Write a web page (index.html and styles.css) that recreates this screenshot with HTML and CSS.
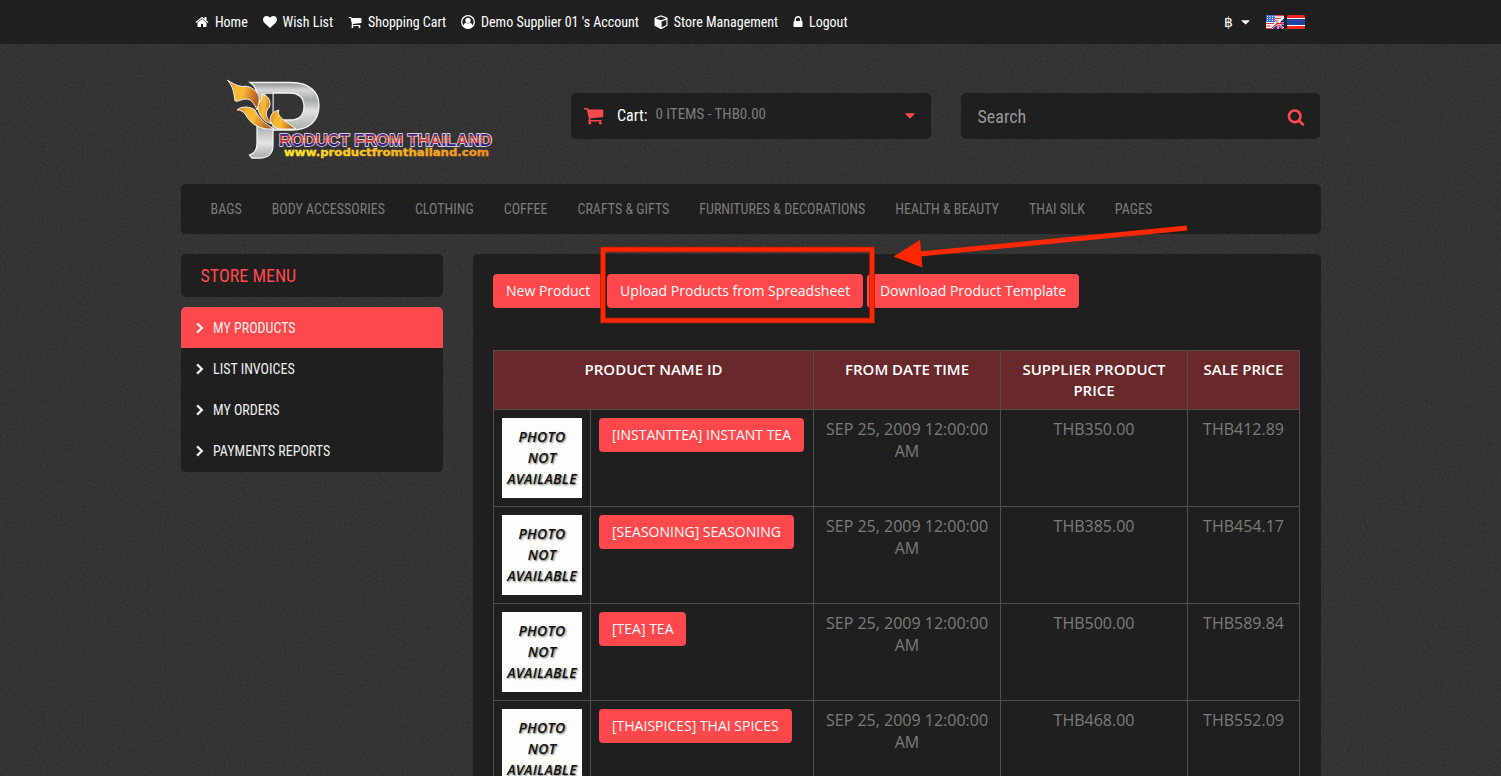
FILE: index.html
```html
<!DOCTYPE html>
<html lang="en">
<head>
<meta charset="utf-8">
<title>Product From Thailand - My Products</title>
<link rel="stylesheet" href="styles.css">
</head>
<body>
<svg class="texture" aria-hidden="true">
  <filter id="grain" x="0" y="0" width="100%" height="100%">
    <feTurbulence type="fractalNoise" baseFrequency="0.45" numOctaves="3" seed="7"/>
    <feColorMatrix type="matrix" values="0 0 0 0 1  0 0 0 0 1  0 0 0 0 1  0.7 0.3 0 0 -0.43"/>
  </filter>
  <rect width="100%" height="100%" filter="url(#grain)"/>
</svg>
<svg class="defs" aria-hidden="true">
  <symbol id="home" viewBox="0 0 1792 1792"><path d="M1472 992v480q0 26-19 45t-45 19h-384v-384h-256v384h-384q-26 0-45-19t-19-45v-480q0-1 .5-3t.5-3l575-474 575 474q1 2 1 6zm223-69l-62 74q-8 9-21 11h-3q-13 0-21-7l-692-577-692 577q-12 8-24 7-13-2-21-11l-62-74q-8-10-7-23.5t11-21.5l719-599q32-26 76-26t76 26l244 204v-195q0-14 9-23t23-9h192q14 0 23 9t9 23v408l219 182q10 8 11 21.5t-7 23.5z"/></symbol>
  <symbol id="heart" viewBox="0 0 1792 1792"><path d="M896 1664q-26 0-44-18l-624-602q-10-8-27.500-26t-55.500-65.500-68-97.500-53.500-121-23.500-138q0-220 127-344t351-124q62 0 126.500 21.500t120 58 95.500 68.500 76 68q36-36 76-68t95.500-68.500 120-58 126.500-21.500q224 0 351 124t127 344q0 221-229 450l-623 600q-18 18-44 18z"/></symbol>
  <symbol id="cart" viewBox="0 0 1792 1792"><path d="M704 1536q0 52-38 90t-90 38-90-38-38-90 38-90 90-38 90 38 38 90zm896 0q0 52-38 90t-90 38-90-38-38-90 38-90 90-38 90 38 38 90zm128-1088v512q0 24-16.500 42.500t-40.500 21.500l-1044 122q13 60 13 70 0 16-24 64h920q26 0 45 19t19 45-19 45-45 19h-1024q-26 0-45-19t-19-45q0-11 8-31.500t16-36 21.500-40 15.500-29.500l-177-823h-204q-26 0-45-19t-19-45 19-45 45-19h256q16 0 28.500 6.500t19.500 15.500 13 24.500 8 26 5.500 29.500 4.500 26h1201q26 0 45 19t19 45z"/></symbol>
  <symbol id="user" viewBox="0 0 14 14"><circle cx="7" cy="7" r="6.300" fill="none" stroke="currentColor" stroke-width="1.300"/><circle cx="7" cy="5.400" r="2.700"/><path d="M2.300 11.200C2.600 9.200 3.600 8 4.900 7.700Q7 9.300 9.100 7.700C10.400 8 11.400 9.200 11.700 11.200Q9.800 13.300 7 13.300T2.300 11.200z"/></symbol>
  <symbol id="cube" viewBox="0 0 14 14"><path fill-rule="evenodd" d="M7 .2 13 2.400Q13.500 2.600 13.500 3.300V10.200Q13.500 10.800 13 11.100L7.500 13.900Q7 14.100 6.500 13.900L1 11.100Q.5 10.800.5 10.200V3.300Q.5 2.600 1 2.400zM7 1.500 1.800 3.400 7 5.300 12.200 3.400zM7.600 6.500V12.500L12.400 10.100V4.700z"/></symbol>
  <symbol id="lock" viewBox="0 0 1792 1792"><path d="M640 768h512v-192q0-106-75-181t-181-75-181 75-75 181v192zm832 96v576q0 40-28 68t-68 28h-960q-40 0-68-28t-28-68v-576q0-40 28-68t68-28h32v-192q0-184 132-316t316-132 316 132 132 316v192h32q40 0 68 28t28 68z"/></symbol>
  <symbol id="search" viewBox="0 0 1792 1792"><path d="M1216 832q0-185-131.500-316.500t-316.500-131.500-316.500 131.500-131.500 316.500 131.500 316.500 316.500 131.500 316.500-131.500 131.500-316.500zm512 832q0 52-38 90t-90 38q-54 0-90-38l-343-342q-179 124-399 124-143 0-273.500-55.500t-225-150-150-225-55.500-273.500 55.500-273.500 150-225 225-150 273.500-55.500 273.500 55.500 225 150 150 225 55.500 273.500q0 220-124 399l343 343q37 37 37 90z"/></symbol>
  <symbol id="chevron" viewBox="0 0 8 12"><path d="M1.900.6 7.500 6 1.900 11.400.3 9.800 4.200 6 .3 2.200z"/></symbol>
  <symbol id="caret" viewBox="0 0 10 6"><path d="M.5.300h9q.5.300.1.800L5.400 5.200q-.4.300-.8 0L.4 1.100Q0 .6.500.3z"/></symbol>
</svg>

<header class="topbar">
  <div class="container topbar-row">
    <nav class="toplinks">
      <a><svg class="ico"><use href="#home"/></svg><span>Home</span></a>
      <a><svg class="ico"><use href="#heart"/></svg><span>Wish List</span></a>
      <a><svg class="ico"><use href="#cart"/></svg><span>Shopping Cart</span></a>
      <a><svg class="ico"><use href="#user"/></svg><span>Demo Supplier 01 's Account</span></a>
      <a><svg class="ico"><use href="#cube"/></svg><span>Store Management</span></a>
      <a class="tight"><svg class="ico" viewBox="2 1 10 12"><use href="#lock" width="14" height="14"/></svg><span>Logout</span></a>
    </nav>
    <div class="locale">
      <span class="currency">฿</span>
      <svg class="caret"><use href="#caret"/></svg>
      <svg class="flag flag-en" viewBox="0 0 18 14">
        <rect width="18" height="14" fill="#fff"/>
        <path d="M9 .7h9M9 3.300h9M9 5.900h9" stroke="#d8404a" stroke-width="1.200"/>
        <rect width="9" height="7" fill="#3c6fd0"/>
        <path d="M1 1.500h8M1 3.500h8M1 5.500h8" stroke="#fff" stroke-dasharray="1 1.500"/>
        <path d="M0 8.500h8M0 11h5M0 13.500h5" stroke="#e0404a" stroke-width="1.200"/>
        <path d="M18 1.500V14H5z" fill="#22229a"/>
        <path d="M5 14 18 2M11 8l7 6M12 8v6M10 8.500h8" stroke="#fff" stroke-width="2.200"/>
        <path d="M5 14 10.500 9M12 7v7M10 8.500h8M13 10l5 4" stroke="#e02a34" stroke-width="1.100"/>
      </svg>
      <svg class="flag" viewBox="0 0 18 14">
        <rect width="18" height="14" rx="1.500" fill="#f02a20"/>
        <rect y="3" width="18" height="8" fill="#fff"/>
        <rect y="4" width="18" height="6" fill="#1c47a4"/>
      </svg>
    </div>
  </div>
</header>

<div class="container masthead">
  <svg class="logo" viewBox="0 0 290 100" role="img" aria-label="Product From Thailand">
    <defs>
      <linearGradient id="steel" x1="0" y1="0" x2="0" y2="1">
        <stop offset="0" stop-color="#888d8c"/><stop offset=".1" stop-color="#d5d8d7"/><stop offset=".23" stop-color="#a5aaa9"/><stop offset=".38" stop-color="#dfe2e1"/><stop offset=".6" stop-color="#aeb3b2"/><stop offset=".8" stop-color="#e4e6e6"/><stop offset="1" stop-color="#a5aaa9"/>
      </linearGradient>
      <linearGradient id="gold" x1="0" y1="0" x2="1" y2=".25">
        <stop offset="0" stop-color="#c9782a"/><stop offset=".3" stop-color="#f9b52c"/><stop offset=".55" stop-color="#f9b83a"/><stop offset="1" stop-color="#b8601f"/>
      </linearGradient>
      <linearGradient id="flagfill" gradientUnits="userSpaceOnUse" x1="0" y1="63" x2="0" y2="76">
        <stop offset="0" stop-color="#2c1c86"/><stop offset=".18" stop-color="#43208c"/><stop offset=".22" stop-color="#e0523a"/><stop offset=".36" stop-color="#a02a40"/><stop offset=".46" stop-color="#e0603c"/><stop offset=".58" stop-color="#b02c34"/><stop offset=".72" stop-color="#d84a3a"/><stop offset=".8" stop-color="#45208a"/><stop offset="1" stop-color="#241875"/>
      </linearGradient>
      <linearGradient id="urlfill"><stop offset="0" stop-color="#ffe52a"/><stop offset=".5" stop-color="#f9b81f"/><stop offset="1" stop-color="#ef8b20"/></linearGradient>
    </defs>
    <path d="M35 12.500H76C95 12.500 104 22 104 35.500 104 51 94 60 77 60H58V75C58 84 54 88 44 88H37L34.500 85C40 83 42 80 42 74V26C42 20 39 15 35 12.500zM58 23V50H75C84 50 89 45 89 36.500 89 28 84 23 75 23z" fill="url(#steel)" stroke="#f4f4f4" stroke-width="1.300" fill-rule="evenodd"/>
    <path d="M51 24H57.500V49H60L56 58 43 50 36 42 44 34z" fill="#333"/>
    <g fill="url(#gold)" stroke="#fff" stroke-width=".9">
      <path d="M12.500 10.200C17 13 22 16 27 16.500 35 15 41 20 44 26 45 32 43 36 42 40 39 33 36 29 31 29 26 29 24 32 20 31 19 23 18 16 12.500 10.200z"/>
      <path d="M47 24C54 26 56 31 54.500 37 49 42 51 48 57 54 49 52 43 45 43 37 43 32 48 31 47 24z"/>
      <path d="M22 40C26 36 35 36 40 40 44 48 49 53 59 59 44 60 37 54 32 47 29 41 25 40 22 40z"/>
      <path d="M64 40C61 46 70 51 81 59H63C58 56 54 52 55.500 47 57 42 61 41 64 40z"/>
    </g>
    <text class="logo-name" x="64" y="75.800" textLength="213" lengthAdjust="spacingAndGlyphs">RODUCT FROM THAILAND</text>
    <text class="logo-url" x="69" y="86.300" textLength="205" lengthAdjust="spacingAndGlyphs">www.productfromthailand.com</text>
  </svg>
  <div class="cartbox">
    <svg class="cart-ico"><use href="#cart"/></svg>
    <strong>Cart:</strong><span class="cart-total">0 ITEMS - THB0.00</span>
    <svg class="caret red"><use href="#caret"/></svg>
  </div>
  <div class="searchbox">
    <span>Search</span>
    <svg class="search-ico"><use href="#search"/></svg>
  </div>
</div>

<nav class="container mainnav">
  <a>BAGS</a><a>BODY ACCESSORIES</a><a>CLOTHING</a><a>COFFEE</a><a>CRAFTS &amp; GIFTS</a><a>FURNITURES &amp; DECORATIONS</a><a>HEALTH &amp; BEAUTY</a><a>THAI SILK</a><a>PAGES</a>
</nav>

<div class="container columns">
  <aside class="sidebar">
    <h3>STORE MENU</h3>
    <ul>
      <li class="active"><svg class="chev"><use href="#chevron"/></svg>MY PRODUCTS</li>
      <li><svg class="chev"><use href="#chevron"/></svg>LIST INVOICES</li>
      <li><svg class="chev"><use href="#chevron"/></svg>MY ORDERS</li>
      <li><svg class="chev"><use href="#chevron"/></svg>PAYMENTS REPORTS</li>
    </ul>
  </aside>
  <main class="content">
    <div class="actions">
      <a class="btn">New Product</a><a class="btn">Upload Products from Spreadsheet</a><a class="btn">Download Product Template</a>
    </div>
    <table class="products">
      <colgroup><col class="c-photo"><col class="c-name"><col class="c-date"><col class="c-date"><col class="c-sale"></colgroup>
      <thead><tr><th colspan="2">PRODUCT NAME ID</th><th>FROM DATE TIME</th><th>SUPPLIER PRODUCT PRICE</th><th>SALE PRICE</th></tr></thead>
      <tbody>
        <tr><td><div class="photo">PHOTO<br>NOT<br>AVAILABLE</div></td><td class="name"><a class="btn">[INSTANTTEA] INSTANT TEA</a></td><td>SEP 25, 2009 12:00:00 AM</td><td>THB350.00</td><td>THB412.89</td></tr>
        <tr><td><div class="photo">PHOTO<br>NOT<br>AVAILABLE</div></td><td class="name"><a class="btn">[SEASONING] SEASONING</a></td><td>SEP 25, 2009 12:00:00 AM</td><td>THB385.00</td><td>THB454.17</td></tr>
        <tr><td><div class="photo">PHOTO<br>NOT<br>AVAILABLE</div></td><td class="name"><a class="btn">[TEA] TEA</a></td><td>SEP 25, 2009 12:00:00 AM</td><td>THB500.00</td><td>THB589.84</td></tr>
        <tr><td><div class="photo">PHOTO<br>NOT<br>AVAILABLE</div></td><td class="name"><a class="btn">[THAISPICES] THAI SPICES</a></td><td>SEP 25, 2009 12:00:00 AM</td><td>THB468.00</td><td>THB552.09</td></tr>
      </tbody>
    </table>
  </main>
</div>

<svg class="annotation" viewBox="0 0 610 110" aria-hidden="true">
  <rect x="13" y="29.500" width="269" height="71" fill="none" stroke="#a8200f" stroke-width="5.600"/>
  <rect x="13" y="29.500" width="269" height="71" fill="none" stroke="#ff2600" stroke-width="4"/>
  <path d="M597 8 330 34" stroke="#ff2600" stroke-width="5"/>
  <path d="M303.500 36.500 330 20 332.500 47.500z" fill="#ff2600"/>
</svg>
</body>
</html>
```
FILE: styles.css
```css
* { box-sizing: border-box; }
html, body { margin: 0; height: 776px; overflow: hidden; }
body {
  position: relative;
  background: #323232;
  color: #7c7c7c;
  font: 16px/22px "Open Sans", sans-serif;
}
.texture { position: absolute; top: 0; left: 0; width: 100%; height: 776px; opacity: .13; z-index: -1; }
.defs { position: absolute; width: 0; height: 0; }
svg { fill: currentColor; flex: none; }
.container { width: 1140px; margin: 0 auto; }

.topbar, .masthead, .mainnav, .sidebar {
  font-family: "Roboto Condensed", Roboto, sans-serif;
  font-stretch: 75%;
}

.topbar { height: 44px; background: #1f1f1f; color: #fff; }
.topbar-row { display: flex; align-items: center; height: 44px; padding: 0 16px 0 14.5px; }
.toplinks { display: flex; gap: 14.9px; font-size: 14px; line-height: 20px; }
.toplinks a { display: flex; align-items: center; gap: 5.9px; white-space: nowrap; }
.ico { width: 14px; height: 14px; }
.tight .ico { width: 10px; height: 12px; }
.locale { display: flex; align-items: center; margin-left: auto; font-size: 14px; }
.currency { margin-right: 8px; }
.caret { width: 9px; height: 5px; }
.flag { width: 18px; height: 14px; margin-left: 3px; }
.flag-en { margin-left: 16px; }

.masthead { display: flex; height: 140px; }
.logo { width: 290px; height: 100px; margin: 26px 66px 0 34px; }
.logo-name {
  font: bold 16.5px "Liberation Sans", sans-serif;
  fill: url(#flagfill);
  stroke: #f4f0f8;
  stroke-width: 1.4px;
  paint-order: stroke;
}
.logo-url { font: bold 10.5px "DejaVu Sans", sans-serif; fill: url(#urlfill); stroke: url(#urlfill); stroke-width: .4px; }
.cartbox, .searchbox { display: flex; align-items: center; height: 46px; margin-top: 49px; background: #1f1f1f; border-radius: 5px; }
.cartbox { width: 360px; padding: 0 16px 0 12px; }
.cart-ico { width: 21px; height: 21px; margin-top: -1px; color: #ff484c; }
.cartbox strong { margin-left: 13.5px; font-size: 16px; font-weight: 400; color: #fff; }
.cart-total { margin: -4px auto 0 8px; font-size: 15px; }
.red { color: #ff484c; width: 10px; height: 6px; }
.searchbox { width: 359px; margin-left: 30px; padding: 0 15px 0 17px; font-size: 18px; color: #999; justify-content: space-between; }
.searchbox span { margin-top: 2px; }
.search-ico { width: 18px; height: 18px; margin-top: 2px; color: #ff484c; }

.mainnav { display: flex; gap: 30px; height: 50px; padding: 0 30px; background: #1f1f1f; border-radius: 5px; font-size: 14px; line-height: 50px; white-space: nowrap; }

.columns { display: flex; gap: 30px; margin-top: 20px; }
.sidebar { width: 262px; }
.sidebar h3 { height: 43px; margin: 0 0 10px; padding-left: 20px; background: #1f1f1f; border-radius: 5px; color: #ff484c; font-size: 18px; font-weight: 400; line-height: 43px; }
.sidebar ul { margin: 0; padding: 0 0 1px; list-style: none; background: #1f1f1f; border-radius: 5px; overflow: hidden; }
.sidebar li { display: flex; align-items: center; height: 41px; padding-left: 15px; color: #eee; font-size: 14px; }
.sidebar .active { background: #ff484c; }
.chev { width: 8px; height: 12px; margin: 1px 9.5px 0 0; }

.content { width: 848px; height: 560px; padding: 20px 20px 20px 20.5px; background: #1f1f1f; border-radius: 5px; }
.actions { display: flex; gap: 3.8px; height: 34px; margin-bottom: 42px; }
.btn { display: inline-block; height: 34px; padding: 7px 13px; background: #ff484c; border-radius: 4px; color: #fff; font-size: 14px; line-height: 20px; white-space: nowrap; }
.products { width: 807px; border-collapse: collapse; table-layout: fixed; text-align: center; }
.c-photo { width: 97px; }
.c-name { width: 223px; }
.c-date { width: 187px; }
.c-sale { width: 112px; }
.products th, .products td { padding: 8px; border: 1px solid #4f4f4f; vertical-align: top; }
.products th { background: #69282a; color: #fff; font-size: 15px; font-weight: 600; line-height: 21px; }
.products .name { text-align: left; }
.name .btn { display: block; width: fit-content; }
.photo { width: 80px; height: 80px; padding-top: 8px; background: #fdfdfc; color: #111; font: italic 600 14px/21px "Open Sans", sans-serif; letter-spacing: .3px; text-shadow: 1px 1px 2px #666; }

.annotation { position: absolute; left: 590px; top: 220px; width: 610px; height: 110px; }
```
